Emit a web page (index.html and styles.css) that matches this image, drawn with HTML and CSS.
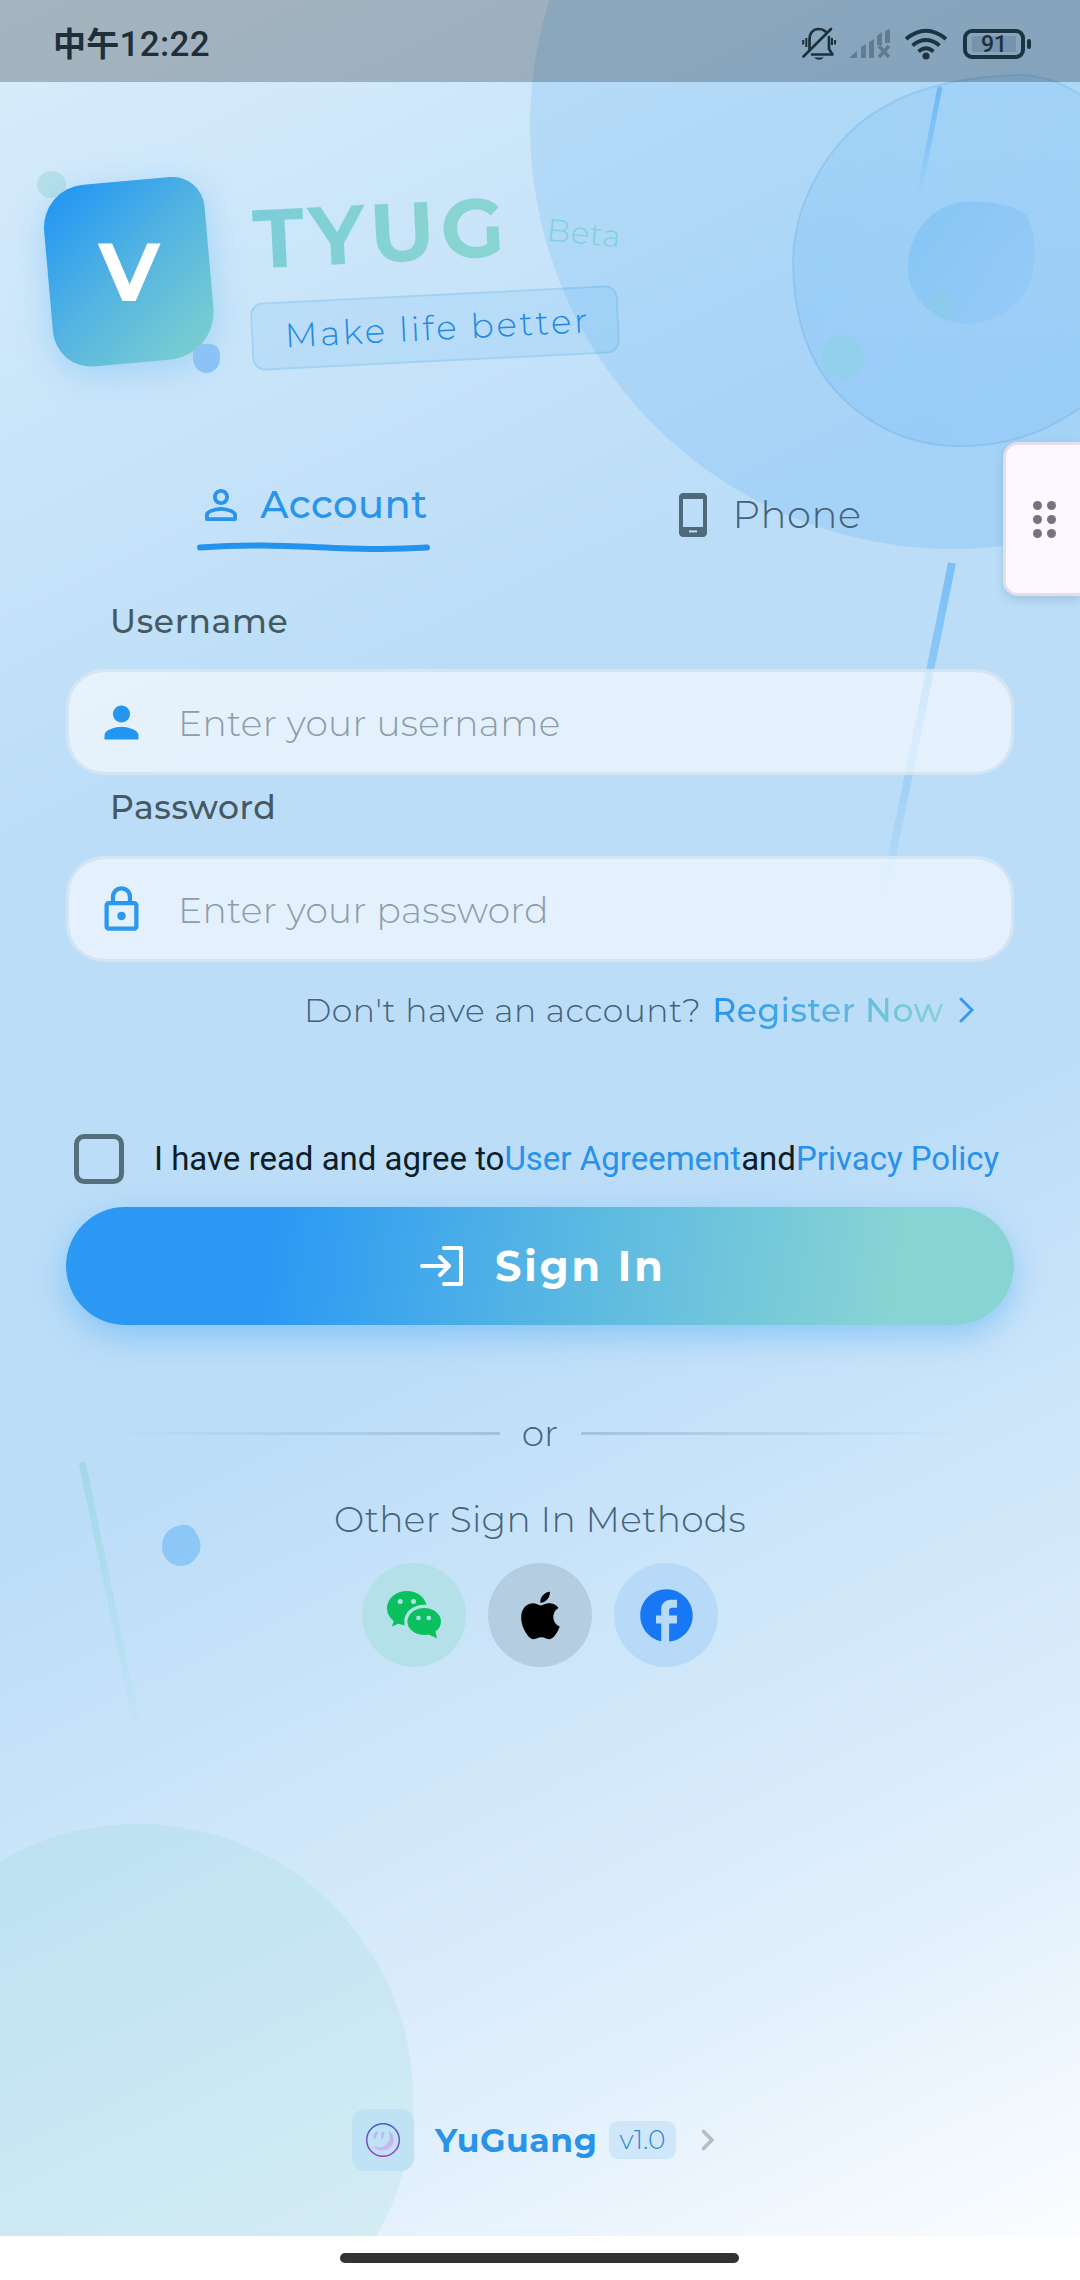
FILE: index.html
```html
<!DOCTYPE html>
<html lang="en">
<head>
<meta charset="utf-8">
<title>TYUG Sign In</title>
<link rel="stylesheet" href="styles.css">
</head>
<body>
<div class="screen">
  <svg class="decor" viewBox="0 0 1080 2236" width="1080" height="2236" aria-hidden="true">
    <defs>
      <linearGradient id="blob" x1="0" y1="0" x2="1" y2="0"><stop offset="0" stop-color="#2196f3" stop-opacity=".11"/><stop offset="1" stop-color="#2196f3" stop-opacity=".07"/></linearGradient>
      <linearGradient id="core" x1="0" y1="0" x2="1" y2="1"><stop offset="0" stop-color="#2196f3" stop-opacity=".2"/><stop offset="1" stop-color="#2196f3" stop-opacity=".05"/></linearGradient>
      <linearGradient id="ray1" gradientUnits="userSpaceOnUse" x1="940" y1="87" x2="919" y2="194"><stop offset="0" stop-color="#2196f3" stop-opacity=".42"/><stop offset=".5" stop-color="#2196f3" stop-opacity=".22"/><stop offset="1" stop-color="#2196f3" stop-opacity="0"/></linearGradient>
      <linearGradient id="ray2" gradientUnits="userSpaceOnUse" x1="952" y1="563" x2="878" y2="925"><stop offset="0" stop-color="#2196f3" stop-opacity=".42"/><stop offset="1" stop-color="#2196f3" stop-opacity="0"/></linearGradient>
      <linearGradient id="ray3" gradientUnits="userSpaceOnUse" x1="82" y1="1462" x2="142" y2="1750"><stop offset="0" stop-color="#80d4d0" stop-opacity=".42"/><stop offset="1" stop-color="#80d4d0" stop-opacity="0"/></linearGradient>
    </defs>
    <circle cx="953" cy="126" r="423" fill="#2196f3" fill-opacity=".14"/>
    <path d="M793 260C794 200 832 135 884 107C922 84 975 76 1019 75C1062 75 1108 105 1140 160C1180 240 1150 360 1080 408C1040 436 1000 448 950 446C895 443 852 414 825 378C800 342 793 300 793 260Z" fill="url(#blob)" stroke="#2180c3" stroke-opacity=".14" stroke-width="2"/>
    <path d="M908 268C908 232 932 206 962 202C990 200 1016 206 1026 215C1036 230 1037 260 1030 284C1018 308 994 324 966 324C934 322 908 298 908 268Z" fill="url(#core)"/>
    <ellipse cx="843" cy="357" rx="21" ry="22" fill="#80d4d0" fill-opacity=".3"/>
    <circle cx="943" cy="305" r="15" fill="#80d4d0" fill-opacity=".16"/>
    <path d="M940 87L919 194" stroke="url(#ray1)" stroke-width="5"/>
    <path d="M952 563L878 925" stroke="url(#ray2)" stroke-width="8"/>
    <path d="M82 1462L142 1750" stroke="url(#ray3)" stroke-width="7"/>
    <path d="M162 1547C162 1534 170 1527 178 1526C186 1523 193 1526 196 1533C203 1543 201 1553 195 1559C189 1567 178 1568 171 1563C165 1559 162 1553 162 1547Z" fill="#2196f3" fill-opacity=".32"/>
    <circle cx="138" cy="2099" r="275" fill="#80d4d0" fill-opacity=".17"/>
  </svg>

  <header class="status">
    <span class="time"><b>中午</b>12:22</span>
    <svg class="bell" viewBox="0 0 36 36" width="36" height="36" fill="none" stroke="#1c303e" stroke-width="2.7" stroke-linecap="round" stroke-linejoin="round">
      <path d="M8.500 24V14C8.500 7 12 3 18 3C21 3 23 4 24.500 5.500M28 11V23L31.500 28.500H11"/><path d="M30 3L2.500 30.500"/><path d="M2.200 14V18.500M5.300 12V21M34 14V18.500M31 12V19" stroke-width="2" stroke-linecap="butt"/><path d="M13 31.500H23Q18 36 13 31.500Z" fill="#1c303e" stroke="none"/>
    </svg>
    <svg class="signal" viewBox="0 0 42 32" width="42" height="32" fill="#617c90">
      <path d="M0 30L8 23V30ZM12 19L17 16V30H12ZM20 14L25 11V30H20ZM28 8L33 4V17H28ZM36 3L41 1V15H36Z"/><path d="M30 18L40 29M40 18L30 29" stroke="#617c90" stroke-width="3.500"/>
    </svg>
    <svg class="wifi" viewBox="0 0 42 32" width="42" height="32" fill="none" stroke="#1c3340" stroke-width="3.800">
      <path d="M1 11Q21 -5.500 41 11M7.500 17.500Q21 6.500 34.500 17.500M13.500 23.500Q21 17 28.500 23.500"/><circle cx="21" cy="28" r="3.600" fill="#1c3340" stroke="none"/>
    </svg>
    <span class="battery"><span class="charge">91</span></span>
  </header>

  <section class="brand">
    <div class="logo"><span class="dot green"></span><span class="tile"></span><span class="dot blue"></span><span class="letter">V</span></div>
    <div class="names">
      <div class="title-row"><span class="title">TYUG</span><span class="beta">Beta</span></div>
      <div class="slogan"><span>Make life better</span></div>
    </div>
  </section>

  <nav class="tabs">
    <div class="tab active">
      <div class="tab-label">
        <svg viewBox="0 0 24 24" width="48" height="48" fill="currentColor"><path d="M12 5.900a2.100 2.100 0 1 1 0 4.200a2.100 2.100 0 0 1 0-4.200m0 9c2.970 0 6.100 1.460 6.100 2.100v1.100H5.900V17c0-.64 3.130-2.100 6.100-2.100M12 4C9.790 4 8 5.790 8 8s1.790 4 4 4s4-1.790 4-4s-1.790-4-4-4m0 9c-2.670 0-8 1.340-8 4v2c0 .6.400 1 1 1h14c.6 0 1-.4 1-1v-2c0-2.660-5.330-4-8-4z"/></svg>
        <span>Account</span>
      </div>
      <svg class="wave" viewBox="0 0 236 14" width="236" height="14"><path d="M5 7.500C90 1 150 13 232 7.500" fill="none" stroke="#2593ee" stroke-width="6" stroke-linecap="round"/></svg>
    </div>
    <div class="tab">
      <div class="tab-label">
        <svg viewBox="0 0 24 24" width="48" height="48" fill="#4f6a7b"><path d="M17 1.010L7 1c-1.100 0-2 .9-2 2v18c0 1.100.9 2 2 2h10c1.100 0 2-.9 2-2V3c0-1.100-.9-1.990-2-1.990zM17 18H7V4h10v14z"/><path d="M10 20.200h4" stroke="#bcdef8" stroke-width="1"/></svg>
        <span>Phone</span>
      </div>
    </div>
  </nav>

  <form class="form">
    <label class="label username">Username</label>
    <div class="field">
      <svg viewBox="0 0 24 24" width="51" height="51" fill="#2196f3"><path d="M12 12c2.210 0 4-1.790 4-4s-1.790-4-4-4s-4 1.790-4 4s1.790 4 4 4zm0 2c-2.670 0-8 1.340-8 4v2h16v-2c0-2.660-5.330-4-8-4z"/></svg>
      <span>Enter your username</span>
    </div>
    <label class="label password">Password</label>
    <div class="field">
      <svg viewBox="0 0 24 24" width="51" height="51" fill="none" stroke="#2b97ee" stroke-width="2"><rect x="5" y="9" width="14" height="12" rx="1"/><path d="M8 9V6a4 4 0 0 1 8 0V9"/><circle cx="12" cy="15" r="2" fill="#2b97ee" stroke="none"/></svg>
      <span>Enter your password</span>
    </div>
    <div class="register">
      <span class="ask">Don't have an account?</span><span class="now">Register Now</span>
      <svg viewBox="0 0 16 26" width="16" height="26" fill="none" stroke="#3b99ee" stroke-width="3"><path d="M2 2L13 13L2 24" stroke-linecap="round"/></svg>
    </div>
    <div class="terms"><span class="check"></span><span class="terms-text">I have read and agree to<a>User Agreement</a>and<a>Privacy Policy</a></span></div>
    <div class="signin">
      <svg viewBox="0 0 44 40" width="44" height="40" fill="none" stroke="#fff" stroke-width="4" stroke-linecap="round" stroke-linejoin="round"><path d="M2 20H28M20 11L29 20L20 29M24 2H41V38H24"/></svg>
      <span>Sign In</span>
    </div>
  </form>

  <div class="divider"><i class="rule left"></i><span>or</span><i class="rule right"></i></div>
  <div class="other"><span>Other Sign In Methods</span></div>
  <div class="social">
    <span class="round wechat"><svg viewBox="0 0 54 48" width="54" height="48" fill="#0bc15f">
      <defs>
        <mask id="back"><rect width="54" height="48" fill="#fff"/><ellipse cx="37.200" cy="30.500" rx="20" ry="16.800" fill="#000"/><circle cx="13.200" cy="10.500" r="2.500" fill="#000"/><circle cx="26.500" cy="10.500" r="2.500" fill="#000"/></mask>
        <mask id="front"><rect width="54" height="48" fill="#fff"/><circle cx="31.500" cy="27" r="2.300" fill="#000"/><circle cx="41.800" cy="27" r="2.300" fill="#000"/></mask>
      </defs>
      <g mask="url(#back)"><ellipse cx="19.900" cy="17.200" rx="19.900" ry="17.200"/><path d="M7 29L5 35.500L13 32Z"/></g>
      <g mask="url(#front)"><ellipse cx="37.200" cy="30.500" rx="16.800" ry="13.600"/><path d="M41 43L50 47.500L48 39Z"/></g>
    </svg></span>
    <span class="round apple"><svg viewBox="0 0 24 24" width="57" height="57"><path d="M18.710 19.500C17.880 20.740 17 21.950 15.660 21.970C14.320 22 13.890 21.180 12.370 21.180C10.840 21.180 10.370 21.950 9.100 22C7.790 22.050 6.800 20.680 5.960 19.470C4.250 17 2.940 12.450 4.700 9.390C5.570 7.870 7.130 6.910 8.820 6.880C10.100 6.860 11.320 7.750 12.110 7.750C12.890 7.750 14.370 6.680 15.920 6.840C16.570 6.870 18.390 7.100 19.560 8.820C19.470 8.880 17.390 10.100 17.410 12.630C17.440 15.650 20.060 16.660 20.090 16.670C20.060 16.740 19.670 18.110 18.710 19.500M13 3.500C13.730 2.670 14.940 2.040 15.940 2C16.070 3.170 15.600 4.350 14.900 5.190C14.210 6.040 13.070 6.700 11.950 6.610C11.800 5.460 12.360 4.260 13 3.500Z"/></svg></span>
    <span class="round facebook"><svg viewBox="0 0 24 24" width="63" height="63" fill="#1877f2"><path d="M22 12c0-5.520-4.480-10-10-10S2 6.480 2 12c0 4.840 3.440 8.870 8 9.800V15H8v-3h2V9.500C10 7.570 11.570 6 13.500 6H16v3h-2c-.55 0-1 .45-1 1v2h3v3h-3v6.950c5.050-.5 9-4.760 9-9.950z"/></svg></span>
  </div>

  <footer class="about">
    <span class="app-icon"><svg viewBox="0 0 36 36" width="36" height="36" fill="none">
      <defs><linearGradient id="ring" x1="0" y1="0" x2="0" y2="1"><stop offset="0" stop-color="#3f61cf"/><stop offset="1" stop-color="#a53ac8"/></linearGradient><linearGradient id="smile" x1="0" y1="0" x2="0" y2="1"><stop offset="0" stop-color="#a7bdf0"/><stop offset="1" stop-color="#d9b4f1"/></linearGradient></defs>
      <circle cx="18" cy="18" r="16.300" stroke="url(#ring)" stroke-width="1.500"/><path d="M9 17C8 13 9 10 13 9.500L11 16ZM16 16L17 10L19.500 10L18 17ZM24 9C32 14 30 28 18 28.500Q11 29 8.500 24Q20 28 24.500 18Q25 13 24 9Z" fill="url(#smile)"/>
    </svg></span>
    <span class="app-name">YuGuang</span>
    <span class="version">v1.0</span>
    <svg viewBox="0 0 14 22" width="14" height="22" fill="none" stroke="#b9bcc0" stroke-width="3.600" stroke-linecap="round"><path d="M2.500 2.500L11 11L2.500 19.500"/></svg>
  </footer>
  <div class="home"><span></span></div>

  <div class="handle"><i></i><i></i><i></i><i></i><i></i><i></i></div>
</div>
</body>
</html>
```
FILE: styles.css
```css
* { box-sizing: border-box; }

body {
  margin: 0;
  font-family: Montserrat, Inter, "Liberation Sans", sans-serif;
}

.screen {
  position: relative;
  width: 1080px;
  height: 2280px;
  overflow: hidden;
  display: flex;
  flex-direction: column;
  background: #fff linear-gradient(154.2deg, #d9edfb 0%, #bbddf8 32%, #bbddf8 56%, #e2f0fc 86%, #fbfdff 100%) top / 1080px 2236px no-repeat;
}

.screen > * { flex-shrink: 0; position: relative; }
.screen > .decor { position: absolute; left: 0; top: 0; }
svg { display: block; flex-shrink: 0; }
span { white-space: nowrap; }

/* Status bar */
.status {
  height: 82px;
  display: flex;
  align-items: center;
  padding: 6px 49px 0 53px;
  background: rgba(0, 0, 0, .24);
  color: #1f2f3a;
}
.time {
  flex: 1;
  padding-top: 2px;
  font: 500 35px/40px Roboto, "Noto Sans CJK SC", sans-serif;
  letter-spacing: .3px;
}
.time b { font-size: 33px; font-weight: 700; }
.signal { margin-left: 12px; }
.wifi { margin-left: 14px; }
.battery {
  position: relative;
  width: 62px;
  height: 30px;
  margin: 0 6px 0 16px;
  border: 4px solid #1c3340;
  border-radius: 9px;
  padding: 3px 5px;
}
.battery::after {
  content: "";
  position: absolute;
  right: -10px;
  top: 6px;
  width: 4px;
  height: 10px;
  border-radius: 2px;
  background: #1c3340;
}
.charge {
  display: block;
  width: 44px;
  height: 16px;
  background: #7593ab;
  font: 500 23px/17px Roboto, sans-serif;
  text-align: center;
}

/* Brand */
.brand {
  height: 358px;
  display: flex;
  padding: 100px 0 0 49px;
}
.logo {
  position: relative;
  width: 160px;
  height: 180px;
  display: grid;
  place-items: center;
}
.tile {
  position: absolute;
  inset: -1px;
  transform: rotate(-5deg);
  border-radius: 43px 32px 48px 38px;
  background: linear-gradient(140deg, #2598f2 8%, #55b5e1 50%, #7ccfcf 96%);
  box-shadow: 0 8px 34px rgba(33, 150, 243, .25);
}
.dot { position: absolute; }
.dot.green { left: -12px; top: -11px; width: 29px; height: 27px; border-radius: 50%; background: #b6e0ea; }
.dot.blue { left: 144px; top: 162px; width: 27px; height: 29px; border-radius: 40% 35% 50% 50%; background: #8bc3f7; }
.letter {
  position: relative;
  color: #fff;
  font-size: 82px;
  font-weight: 700;
  line-height: 82px;
}
.names { margin: 11px 0 0 42px; }
.title-row {
  height: 80px;
  display: flex;
  align-items: center;
}
.title {
  width: 264px;
  padding-left: 2px;
  transform: rotate(-2.86deg);
  font-size: 83px;
  font-weight: 700;
  line-height: 80px;
  letter-spacing: 5.5px;
  color: transparent;
  background: linear-gradient(90deg, #7bcdd8, #88d4d2 70%);
  -webkit-background-clip: text;
  background-clip: text;
}
.beta {
  margin-left: 32px;
  transform: rotate(5.7deg);
  font-size: 31px;
  font-weight: 300;
  letter-spacing: .7px;
  color: #7ed2dc;
}
.slogan {
  width: 368px;
  height: 68px;
  margin-top: 21px;
  padding-left: 5px;
  display: flex;
  align-items: center;
  justify-content: center;
  transform: rotate(-2.86deg);
  border: 2px solid rgba(33, 130, 200, .13);
  border-radius: 13px;
  background: rgba(33, 150, 243, .09);
  color: #2389e4;
  font-size: 34px;
  font-weight: 350;
  letter-spacing: 2.8px;
}

/* Tabs */
.tabs {
  height: 140px;
  padding: 0 88px 0 86px;
  display: flex;
  color: #43617a;
}
.tab {
  flex: 1;
  display: flex;
  flex-direction: column;
  align-items: center;
  padding-top: 51px;
  font-size: 38.5px;
  font-weight: 350;
  letter-spacing: .6px;
}
.tab.active { padding-top: 41px; color: #2a94ea; font-weight: 500; letter-spacing: .5px; }
.tab-label { display: flex; align-items: center; gap: 15px; line-height: 48px; }
.wave { margin-top: 11px; }

/* Form */
.form { padding: 0 66px; }
.label {
  display: block;
  padding-left: 44px;
  color: #465962;
  font-size: 33px;
  font-weight: 500;
  letter-spacing: .6px;
}
.username { height: 89px; padding-top: 20px; line-height: 42px; }
.password { height: 81px; padding-top: 11px; line-height: 42px; }
.field {
  height: 106px;
  display: flex;
  align-items: center;
  gap: 31px;
  padding-left: 27px;
  border: 3px solid rgba(215, 230, 242, .85);
  border-radius: 38px;
  background: rgba(255, 255, 255, .6);
  background-clip: padding-box;
  color: #8c9dab;
  font-size: 36px;
  font-weight: 350;
  letter-spacing: .3px;
}
.field span { padding-top: 2px; }
.register {
  height: 48px;
  margin-top: 24px;
  padding-left: 238px;
  display: flex;
  align-items: center;
  color: #43617a;
  font-size: 33px;
}
.ask { font-weight: 350; letter-spacing: .55px; }
.now {
  margin: 0 15px 0 11px;
  font-weight: 500;
  letter-spacing: .5px;
  color: transparent;
  background: linear-gradient(90deg, #2593ee, #88d4d2);
  -webkit-background-clip: text;
  background-clip: text;
}
.terms {
  height: 50px;
  margin: 100px 0 23px;
  padding-left: 8px;
  display: flex;
  align-items: center;
  gap: 30px;
  color: #0e1e28;
  font: 400 33px/50px Roboto, sans-serif;
}
.terms a { color: #2892ea; }
.check {
  width: 50px;
  height: 50px;
  border: 5px solid #546e7c;
  border-radius: 10px;
}
.signin {
  height: 118px;
  display: flex;
  align-items: center;
  padding-left: 354px;
  gap: 31px;
  border-radius: 59px;
  background: linear-gradient(98deg, #2b99f4 22%, #55b5e3 50%, #88d4d4 87%);
  box-shadow: 0 11px 32px rgba(33, 150, 243, .34);
  color: #fff;
  font-size: 41.25px;
  font-weight: 700;
  letter-spacing: 3px;
}

/* Alternatives */
.divider {
  height: 70px;
  margin-top: 73px;
  padding: 0 110px;
  display: flex;
  align-items: center;
  justify-content: center;
  color: #46637a;
  font-size: 36px;
  font-weight: 350;
}
.divider span { width: 81px; text-align: center; }
.rule { flex: 1; height: 3px; }
.rule.left { background: linear-gradient(90deg, rgba(110, 145, 175, 0), rgba(110, 145, 175, .38)); }
.rule.right { background: linear-gradient(270deg, rgba(110, 145, 175, 0), rgba(110, 145, 175, .38)); }
.other {
  height: 50px;
  margin-top: 26px;
  text-align: center;
  line-height: 50px;
  color: #46637a;
  font-size: 36px;
  font-weight: 350;
  letter-spacing: .3px;
}
.social {
  margin-top: 19px;
  display: flex;
  justify-content: center;
  gap: 22px;
}
.round {
  width: 104px;
  height: 104px;
  border-radius: 50%;
  display: grid;
  place-items: center;
}
.wechat { background: #b4e1e9; }
.apple { background: #b4cde1; }
.facebook { background: #b8daf9; }

/* Footer */
.about {
  height: 62px;
  margin-top: 442px;
  padding-left: 352px;
  display: flex;
  align-items: center;
}
.app-icon {
  width: 62px;
  height: 62px;
  border-radius: 13px;
  display: grid;
  place-items: center;
  background: #c0e2f5;
}
.app-name {
  width: 173px;
  padding-left: 21px;
  margin-right: 22px;
  color: #2893e9;
  font-size: 33px;
  font-weight: 700;
  letter-spacing: .6px;
}
.version {
  width: 67px;
  height: 38px;
  margin-right: 25px;
  border-radius: 9px;
  background: #d0e7fa;
  color: #2a8cd6;
  font-size: 26.5px;
  font-weight: 350;
  line-height: 38px;
  text-align: center;
}
.home {
  height: 44px;
  margin-top: 65px;
  padding: 17px 0 0 340px;
  background: #fff;
}
.home span {
  display: block;
  width: 399px;
  height: 10px;
  border-radius: 5px;
  background: #333;
}

/* Floating side handle */
.screen > .handle {
  position: absolute;
  right: 0;
  top: 442px;
  width: 77px;
  height: 154px;
  display: grid;
  grid-template-columns: 9px 9px;
  grid-auto-rows: 9px;
  gap: 5px;
  align-content: center;
  padding-left: 27px;
  border: 3px solid #e5dfea;
  border-right: 0;
  border-radius: 15px 0 0 15px;
  background: #fdf7ff;
  box-shadow: 0 4px 10px rgba(60, 100, 140, .2);
}
.handle i { border-radius: 50%; background: #7a7179; }
```
